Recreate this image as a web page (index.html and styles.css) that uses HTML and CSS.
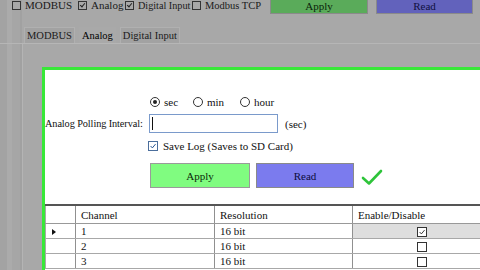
FILE: index.html
```html
<!DOCTYPE html>
<html>
<head>
<meta charset="utf-8">
<link rel="stylesheet" href="styles.css">
</head>
<body>
<div class="screen">
  <div class="topbar">
    <span class="opt o1"><span class="cb"></span>MODBUS</span>
    <span class="opt o2"><span class="cb on"></span>Analog</span>
    <span class="opt o3"><span class="cb on"></span>Digital Input</span>
    <span class="opt o4"><span class="cb"></span>Modbus TCP</span>
    <div class="topbtns">
      <span class="tbtn tapply">Apply</span>
      <span class="tbtn tread">Read</span>
    </div>
  </div>
  <div class="tabs">
    <span class="tab">MODBUS</span>
    <span class="tab active">Analog</span>
    <span class="tab">Digital Input</span>
  </div>
  <div class="tabpage">
    <div class="panel">
      <div class="radios">
        <span class="ritem w1"><span class="radio on"></span>sec</span>
        <span class="ritem w2"><span class="radio"></span>min</span>
        <span class="ritem"><span class="radio"></span>hour</span>
      </div>
      <div class="field">
        <span class="lbl">Analog Polling Interval:</span>
        <span class="input"><span class="caret"></span></span>
        <span class="unit">(sec)</span>
      </div>
      <div class="savelog">
        <span class="cb2"><svg viewBox="0 0 10 10" width="10" height="10"><polyline points="2,5 4.2,7.4 8.2,2.6" fill="none" stroke="#1d4e8f" stroke-width="1.2"/></svg></span>
        <span>Save Log (Saves to SD Card)</span>
      </div>
      <div class="actions">
        <span class="btn apply">Apply</span>
        <span class="btn read">Read</span>
        <svg class="tick" viewBox="0 0 22 18" width="22" height="18"><polyline points="2,10 8,15.5 20,3" fill="none" stroke="#2ec43a" stroke-width="2.6" stroke-linecap="round" stroke-linejoin="round"/></svg>
      </div>
      <table class="grid">
        <colgroup><col class="c0"><col class="c1"><col class="c2"><col class="c3"></colgroup>
        <thead>
          <tr><th></th><th>Channel</th><th>Resolution</th><th>Enable/Disable</th></tr>
        </thead>
        <tbody>
          <tr><td class="rh"><span class="arrow"></span></td><td>1</td><td>16 bit</td><td class="en sel"><span class="gcb"><svg viewBox="0 0 10 10" width="10" height="10"><polyline points="2,5 4.2,7.4 8.2,2.6" fill="none" stroke="#222" stroke-width="1.1"/></svg></span></td></tr>
          <tr><td class="rh"></td><td>2</td><td>16 bit</td><td class="en"><span class="gcb"></span></td></tr>
          <tr><td class="rh"></td><td>3</td><td>16 bit</td><td class="en"><span class="gcb"></span></td></tr>
        </tbody>
      </table>
    </div>
  </div>
</div>
</body>
</html>
```
FILE: styles.css
```css
html, body {
  margin: 0;
  padding: 0;
}
body {
  width: 480px;
  height: 270px;
  overflow: hidden;
  background: #a6a6a6;
  font-family: "Liberation Serif", "Times New Roman", serif;
  font-size: 11px;
  color: #111;
}
.screen {
  width: 480px;
  height: 270px;
  overflow: hidden;
  background: linear-gradient(90deg, #a3a3a3 0, #a3a3a3 7px, #ababab 7px, #ababab 12px, #a6a6a6 12px, #a6a6a6 20px, #a1a1a1 20px, #a1a1a1 22px, #a8a8a8 22px);
}
.topbar {
  display: flex;
  align-items: center;
  height: 20px;
  margin-top: -5px;
  padding-left: 12px;
  color: #1a1a1a;
}
.opt {
  display: flex;
  align-items: center;
  white-space: nowrap;
  flex-shrink: 0;
  overflow: hidden;
}
.o1 { width: 66px; }
.o2 { width: 47px; }
.o3 { width: 67px; font-size: 10.2px; }
.o4 { width: 73px; font-size: 10.5px; }
.cb {
  width: 7px;
  height: 7px;
  border: 1px solid #333;
  background: #a8a8a8;
  margin-right: 4px;
  position: relative;
  flex-shrink: 0;
}
.cb.on::after {
  content: "";
  position: absolute;
  left: 2px;
  top: 0;
  width: 2px;
  height: 4px;
  border-right: 1px solid #222;
  border-bottom: 1px solid #222;
  transform: rotate(40deg);
}
.topbtns {
  display: flex;
  margin-left: auto;
  gap: 8px;
  padding-right: 7px;
}
.tbtn {
  display: flex;
  align-items: center;
  justify-content: center;
  height: 18px;
  box-sizing: border-box;
  border: 1px solid #8a8a8a;
  color: #0a230a;
  flex-shrink: 0;
  padding-top: 1px;
}
.tapply {
  width: 98px;
  background: #5aab5a;
}
.tread {
  width: 97px;
  background: #6262bc;
  color: #101040;
}
.tabs {
  display: flex;
  gap: 4px;
  margin-top: 12px;
  padding-left: 24px;
  height: 16px;
  border-bottom: 1px solid #b6b6b6;
}
.tab {
  display: flex;
  align-items: center;
  padding: 0 2px;
  background: #a2a2a2;
  border: 1px solid #b0b0b0;
  border-bottom: none;
  color: #1a1a1a;
  font-size: 10.5px;
}
.tab.active {
  background: #a9a9a9;
  border-color: transparent;
  color: #000;
}
.tabpage {
  margin-left: 22px;
  border-left: 1px solid #b4b4b4;
  height: 240px;
  padding-top: 23px;
  padding-left: 19px;
}
.panel {
  width: 460px;
  height: 220px;
  background: #fff;
  border: 3px solid #38e838;
  border-right: none;
  border-bottom: none;
}
.radios {
  display: flex;
  align-items: center;
  margin-top: 26px;
  padding-left: 105px;
  height: 12px;
}
.ritem {
  display: flex;
  align-items: center;
}
.w1 { width: 43px; }
.w2 { width: 47px; }
.radio {
  box-sizing: border-box;
  width: 10px;
  height: 10px;
  border: 1px solid #333;
  border-radius: 50%;
  margin-right: 4px;
  position: relative;
}
.radio.on::after {
  content: "";
  position: absolute;
  left: 2px;
  top: 2px;
  width: 4px;
  height: 4px;
  border-radius: 50%;
  background: #222;
}
.field {
  display: flex;
  align-items: center;
  margin-top: 6px;
  height: 19px;
}
.lbl {
  width: 104px;
  white-space: nowrap;
  font-size: 10.3px;
  letter-spacing: -0.1px;
  overflow: hidden;
}
.input {
  width: 125px;
  height: 17px;
  border: 1px solid #7a9acb;
  display: flex;
  align-items: center;
  padding-left: 2px;
}
.caret {
  width: 1px;
  height: 13px;
  background: #111;
}
.unit {
  margin-left: 7px;
}
.savelog {
  display: flex;
  align-items: center;
  margin-top: 7px;
  padding-left: 103px;
  height: 11px;
}
.cb2 {
  width: 10px;
  height: 10px;
  border: 1px solid #4b6e9c;
  box-sizing: border-box;
  margin-right: 5px;
  display: flex;
  align-items: center;
  justify-content: center;
}
.cb2 svg { width: 8px; height: 8px; }
.actions {
  display: flex;
  align-items: center;
  margin-top: 12px;
  padding-left: 105px;
  height: 25px;
}
.btn {
  display: flex;
  align-items: center;
  justify-content: center;
  height: 25px;
  box-sizing: border-box;
  border: 1px solid #9a9a9a;
  font-size: 11px;
}
.apply {
  width: 100px;
  background: #80fc80;
  color: #0a280a;
}
.read {
  width: 98px;
  margin-left: 6px;
  background: #7b7bee;
  color: #0c0c3c;
  border-color: #8a8a8a;
}
.tick {
  margin-left: 7px;
  margin-top: 3px;
}
.grid {
  margin-top: 16px;
  border-collapse: collapse;
  table-layout: fixed;
  width: 450px;
  border-top: 2px solid #555;
}
.c0 { width: 30px; }
.c1 { width: 139px; }
.c2 { width: 138px; }
.c3 { width: 143px; }
.grid th, .grid td {
  border: 1px solid #a8a8a8;
  border-right: 1px solid #909090;
  text-align: left;
  font-weight: normal;
  padding: 0 0 0 5px;
  white-space: nowrap;
  color: #111;
}
.grid th {
  height: 17px;
  border-bottom: 1px solid #999;
}
.grid td {
  height: 14px;
  line-height: 13px;
}
.grid .rh {
  padding-left: 6px;
}
.arrow {
  display: inline-block;
  width: 0;
  height: 0;
  border-top: 3.5px solid transparent;
  border-bottom: 3.5px solid transparent;
  border-left: 4px solid #111;
  vertical-align: middle;
}
.grid td.en {
  text-align: center;
  padding: 0;
}
.grid td.sel {
  background: #dedede;
}
.gcb {
  display: inline-flex;
  width: 10px;
  height: 10px;
  box-sizing: border-box;
  border: 1px solid #333;
  background: #fff;
  vertical-align: middle;
  align-items: center;
  justify-content: center;
  margin-left: -4px;
}
.gcb svg { width: 8px; height: 8px; }
```
